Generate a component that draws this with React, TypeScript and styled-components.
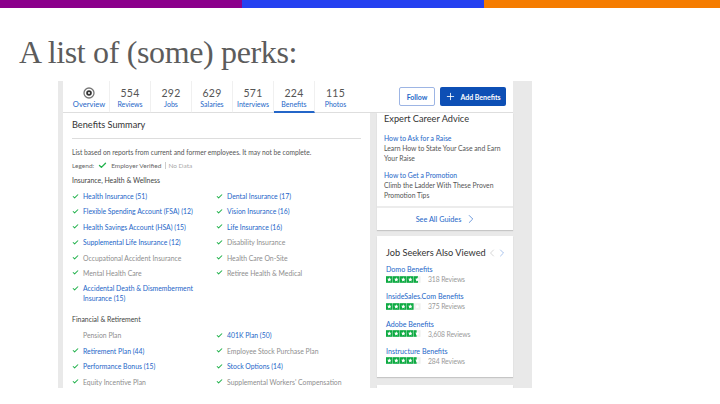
import React from 'react';
import styled, {createGlobalStyle} from 'styled-components';
import {Check, ChevronLeft, ChevronRight, Plus} from 'lucide-react';

const GlobalStyle = createGlobalStyle`
  html, body {
    margin: 0;
    padding: 0;
    background: #fff;
    font-family: Lato, "Open Sans", sans-serif;
  }
  * {
    box-sizing: border-box;
  }
`;

const Slide = styled.div`
  width: 720px;
  height: 404px;
  overflow: hidden;
  display: flex;
  flex-direction: column;
`;

const TopBar = styled.div`
  height: 8px;
  display: flex;
  flex: none;
`;

const TopSegment = styled.div<{$color: string; $width: number}>`
  width: ${p => p.$width}px;
  background: ${p => p.$color};
`;

const Title = styled.h1`
  margin: 0;
  height: 73px;
  padding: 25px 0 0 19px;
  font-family: "Liberation Serif", serif;
  font-weight: 400;
  font-size: 32px;
  letter-spacing: -0.35px;
  line-height: 38px;
  color: #5c5c5c;
  flex: none;
`;

const Shot = styled.div`
  width: 474px;
  height: 307px;
  margin-left: 58px;
  padding: 0 19px 0 5px;
  background: #e9e9e9;
  overflow: hidden;
  flex: none;
`;

const Header = styled.div`
  height: 32px;
  background: #fff;
  display: flex;
  align-items: stretch;
  justify-content: space-between;
  padding: 0 7px 0 6px;
  border-bottom: 1px solid #dedede;
`;

const Tabs = styled.div`
  display: flex;
`;

const Tab = styled.div<{$active?: boolean}>`
  width: 41px;
  display: flex;
  flex-direction: column;
  align-items: center;
  padding-top: 6px;
  border-right: 1px solid #f0f0f0;
  border-bottom: 2px solid ${p => (p.$active ? '#2466c8' : 'transparent')};
  margin-bottom: -1px;
  &:last-child {
    border-right: none;
  }
`;

const TabCount = styled.div`
  font-size: 10.5px;
  line-height: 12px;
  color: #555;
  letter-spacing: 0.2px;
`;

const TabLabel = styled.div<{$wide?: boolean}>`
  font-size: ${p => (p.$wide ? 7.6 : 7)}px;
  line-height: 10px;
  color: #2466c8;
  white-space: nowrap;
`;

const OverviewIcon = styled.svg`
  width: 12px;
  height: 12px;
  display: block;
`;

const Actions = styled.div`
  display: flex;
  align-items: center;
  gap: 5px;
`;

const FollowButton = styled.div`
  width: 36px;
  height: 19px;
  border: 1px solid #9db5e4;
  border-radius: 2px;
  color: #2466c8;
  font-size: 7px;
  font-weight: 700;
  display: flex;
  align-items: center;
  justify-content: center;
`;

const AddButton = styled.div`
  width: 66px;
  height: 19px;
  background: #0d4fb5;
  border-radius: 2px;
  color: #fff;
  font-size: 7px;
  font-weight: 700;
  display: flex;
  align-items: center;
  justify-content: center;
  gap: 4px;
`;

const Columns = styled.div`
  display: flex;
  gap: 7px;
  align-items: flex-start;
`;

const Main = styled.div`
  width: 307px;
  height: 275px;
  background: #fff;
  padding: 0 9px;
  overflow: hidden;
`;

const MainTitle = styled.h2`
  margin: 0;
  height: 26px;
  padding-top: 6px;
  font-size: 9.2px;
  line-height: 12px;
  font-weight: 400;
  color: #333;
  border-bottom: 1px solid #ddd;
`;

const Intro = styled.p`
  margin: 8px 0 0;
  font-size: 6.7px;
  line-height: 10px;
  color: #555;
`;

const Legend = styled.div`
  margin-top: 3px;
  height: 10px;
  display: flex;
  align-items: center;
  font-size: 6.5px;
  color: #666;
`;

const LegendCheck = styled.span`
  margin: 0 4px;
  display: flex;
`;

const NoData = styled.span`
  color: #aaa;
  border-left: 1px solid #ccc;
  margin-left: 4px;
  padding-left: 2px;
`;

const GroupTitle = styled.div<{$top: number}>`
  margin-top: ${p => p.$top}px;
  font-size: 6.9px;
  line-height: 10px;
  color: #444;
`;

const PerkGrid = styled.div`
  margin-top: 6px;
  display: grid;
  grid-template-columns: 144px 1fr;
  row-gap: 5.4px;
`;

const Perk = styled.div`
  display: flex;
  gap: 4px;
  font-size: 6.85px;
  line-height: 10px;
`;

const PerkMark = styled.span`
  width: 7px;
  height: 10px;
  flex: none;
  display: flex;
  align-items: center;
  justify-content: center;
  color: #22b24c;
`;

const PerkLabel = styled.span<{$on?: boolean}>`
  color: ${p => (p.$on ? '#2466c8' : '#8e8e8e')};
  max-width: 115px;
  white-space: ${p => (p.$on ? 'normal' : 'nowrap')};
`;

const Side = styled.div`
  width: 136px;
  display: flex;
  flex-direction: column;
  gap: 6px;
`;

const Card = styled.div`
  background: #fff;
  box-shadow: 0 1px 1px rgba(0, 0, 0, 0.15);
`;

const AdviceBody = styled.div`
  padding: 0 7px 6px;
  height: 93px;
`;

const CardTitle = styled.h3`
  margin: 0;
  font-size: 9.2px;
  line-height: 12px;
  font-weight: 400;
  color: #333;
  white-space: nowrap;
`;

const Advice = styled.div`
  margin-top: 7.5px;
  font-size: 6.8px;
  line-height: 10px;
  color: #555;
`;

const BlueLine = styled.div`
  color: #2466c8;
`;

const SeeAll = styled.div`
  height: 24px;
  border-top: 2px solid #ececec;
  display: flex;
  align-items: center;
  justify-content: center;
  gap: 3px;
  font-size: 7.3px;
  color: #2466c8;
  padding-left: 4px;
`;

const Viewed = styled(Card)`
  height: 141px;
  padding: 11px 9px 0;
`;

const ViewedHead = styled.div`
  display: flex;
  align-items: center;
  margin-bottom: 3px;
`;

const PagerGroup = styled.div`
  display: flex;
`;

const Pager = styled.span<{$on?: boolean}>`
  display: flex;
  color: ${p => (p.$on ? '#6f9ae0' : '#bbb')};
  & + & {
    margin-left: -2px;
  }
`;

const Company = styled.div`
  height: 27.3px;
  padding-top: 3px;
`;

const CompanyName = styled.div`
  font-size: 7.1px;
  line-height: 9px;
  color: #2466c8;
  white-space: nowrap;
`;

const RatingRow = styled.div`
  display: flex;
  align-items: center;
  gap: 7px;
`;

const Reviews = styled.span`
  font-size: 6.8px;
  letter-spacing: -0.1px;
  line-height: 9px;
  color: #999;
  padding-top: 1px;
`;

const Stars = styled.div`
  display: flex;
  gap: 0.5px;
  width: 35px;
`;

const NextCard = styled(Card)`
  height: 20px;
  margin-top: 2px;
`;

const tabs = [
  ['554', 'Reviews'],
  ['292', 'Jobs'],
  ['629', 'Salaries'],
  ['571', 'Interviews'],
  ['224', 'Benefits'],
  ['115', 'Photos'],
];

type PerkItem = {label: string; on?: boolean; noMark?: boolean};

const healthPerks: PerkItem[] = [
  {label: 'Health Insurance (51)', on: true},
  {label: 'Dental Insurance (17)', on: true},
  {label: 'Flexible Spending Account (FSA) (12)', on: true},
  {label: 'Vision Insurance (16)', on: true},
  {label: 'Health Savings Account (HSA) (15)', on: true},
  {label: 'Life Insurance (16)', on: true},
  {label: 'Supplemental Life Insurance (12)', on: true},
  {label: 'Disability Insurance'},
  {label: 'Occupational Accident Insurance'},
  {label: 'Health Care On-Site'},
  {label: 'Mental Health Care'},
  {label: 'Retiree Health & Medical'},
  {label: 'Accidental Death & Dismemberment Insurance (15)', on: true},
];

const financePerks: PerkItem[] = [
  {label: 'Pension Plan', noMark: true},
  {label: '401K Plan (50)', on: true},
  {label: 'Retirement Plan (44)', on: true},
  {label: 'Employee Stock Purchase Plan'},
  {label: 'Performance Bonus (15)', on: true},
  {label: 'Stock Options (14)', on: true},
  {label: 'Equity Incentive Plan'},
  {label: "Supplemental Workers' Compensation"},
];

const companies = [
  {name: 'Domo Benefits', rating: 4.6, reviews: '318 Reviews'},
  {name: 'InsideSales.Com Benefits', rating: 4, reviews: '375 Reviews'},
  {name: 'Adobe Benefits', rating: 4.4, reviews: '3,608 Reviews'},
  {name: 'Instructure Benefits', rating: 4.4, reviews: '284 Reviews'},
];

const StarBox = ({fill}: {fill: number}) => (
  <svg width="7" height="7" viewBox="0 0 7 7">
    <rect width="7" height="7" fill="#eef0ee" />
    <rect width={7 * fill} height="7" fill="#0caa41" />
    <path
      d="M3.5 1.1l.7 1.6 1.6.1-1.2 1.1.4 1.7-1.5-.9-1.5.9.4-1.7L1.2 2.8l1.6-.1z"
      fill="#fff"
    />
  </svg>
);

const PerkList = ({items}: {items: PerkItem[]}) => (
  <PerkGrid>
    {items.map(item => (
      <Perk key={item.label}>
        <PerkMark>{!item.noMark && <Check size={9} strokeWidth={3.6} />}</PerkMark>
        <PerkLabel $on={item.on}>{item.label}</PerkLabel>
      </Perk>
    ))}
  </PerkGrid>
);

export default function App() {
  return (
    <Slide>
      <GlobalStyle />
      <TopBar>
        <TopSegment $color="#8b008b" $width={242} />
        <TopSegment $color="#2541f0" $width={242} />
        <TopSegment $color="#f57c00" $width={236} />
      </TopBar>
      <Title>A list of (some) perks:</Title>
      <Shot>
        <Header>
          <Tabs>
            <Tab>
              <OverviewIcon viewBox="0 0 12 12">
                <circle cx="6" cy="6" r="5" fill="none" stroke="#777" strokeWidth="1.3" />
                <circle cx="6" cy="6" r="2.8" fill="#333" />
                <circle cx="6" cy="6" r="1" fill="#fff" />
              </OverviewIcon>
              <TabLabel $wide>Overview</TabLabel>
            </Tab>
            {tabs.map(([count, label]) => (
              <Tab key={label} $active={label === 'Benefits'}>
                <TabCount>{count}</TabCount>
                <TabLabel>{label}</TabLabel>
              </Tab>
            ))}
          </Tabs>
          <Actions>
            <FollowButton>Follow</FollowButton>
            <AddButton>
              <Plus size={11} strokeWidth={1.8} />
              Add Benefits
            </AddButton>
          </Actions>
        </Header>
        <Columns>
          <Main>
            <MainTitle>Benefits Summary</MainTitle>
            <Intro>List based on reports from current and former employees. It may not be complete.</Intro>
            <Legend>
              Legend:
              <LegendCheck>
                <Check size={9} strokeWidth={3.6} color="#22b24c" />
              </LegendCheck>
              Employer Verified
              <NoData>No Data</NoData>
            </Legend>
            <GroupTitle $top={5}>Insurance, Health &amp; Wellness</GroupTitle>
            <PerkList items={healthPerks} />
            <GroupTitle $top={11}>Financial &amp; Retirement</GroupTitle>
            <PerkList items={financePerks} />
          </Main>
          <Side>
            <Card>
              <AdviceBody>
                <CardTitle>Expert Career Advice</CardTitle>
                <Advice>
                  <BlueLine>How to Ask for a Raise</BlueLine>
                  Learn How to State Your Case and Earn Your Raise
                </Advice>
                <Advice>
                  <BlueLine>How to Get a Promotion</BlueLine>
                  Climb the Ladder With These Proven Promotion Tips
                </Advice>
              </AdviceBody>
              <SeeAll>
                See All Guides
                <ChevronRight size={14} strokeWidth={1.1} />
              </SeeAll>
            </Card>
            <Viewed>
              <ViewedHead>
                <CardTitle>Job Seekers Also Viewed</CardTitle>
                <PagerGroup>
                  <Pager>
                    <ChevronLeft size={12} strokeWidth={1.2} />
                  </Pager>
                  <Pager $on>
                    <ChevronRight size={12} strokeWidth={1.2} />
                  </Pager>
                </PagerGroup>
              </ViewedHead>
              {companies.map(company => (
                <Company key={company.name}>
                  <CompanyName>{company.name}</CompanyName>
                  <RatingRow>
                    <Stars>
                      {[0, 1, 2, 3, 4].map(i => (
                        <StarBox key={i} fill={Math.max(0, Math.min(1, company.rating - i))} />
                      ))}
                    </Stars>
                    <Reviews>{company.reviews}</Reviews>
                  </RatingRow>
                </Company>
              ))}
            </Viewed>
            <NextCard />
          </Side>
        </Columns>
      </Shot>
    </Slide>
  );
}
